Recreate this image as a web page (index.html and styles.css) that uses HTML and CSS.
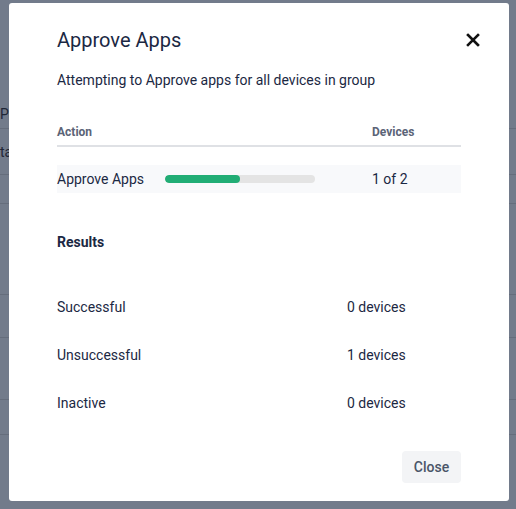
FILE: index.html
```html
<!DOCTYPE html>
<html>
<head>
<meta charset="utf-8">
<link rel="stylesheet" href="styles.css">
</head>
<body>
<div class="backdrop">
  <div class="bg-table">
    <div class="bg-row r1"><span class="bg-text">Po</span></div>
    <div class="bg-row r2"><span class="bg-text">ta</span></div>
    <div class="bg-row r3"></div>
    <div class="bg-row r4"></div>
    <div class="bg-row r5"></div>
    <div class="bg-row r6"></div>
    <div class="bg-row r7"></div>
  </div>
</div>
<div class="modal">
  <div class="modal-head">
    <h1 class="title">Approve Apps</h1>
    <button class="x-btn" aria-label="Close">
      <svg width="14" height="14" viewBox="0 0 14 14"><path d="M2 2L12 12M12 2L2 12" stroke="#111" stroke-width="2.6" stroke-linecap="square"/></svg>
    </button>
  </div>
  <p class="subtitle">Attempting to Approve apps for all devices in group</p>
  <div class="table">
    <div class="thead">
      <div class="c-action">Action</div>
      <div class="c-devices">Devices</div>
    </div>
    <div class="trow">
      <div class="c-action action-cell">
        <span class="action-name">Approve Apps</span>
        <div class="progress"><div class="progress-fill" style="width:50%"></div></div>
      </div>
      <div class="c-devices">1 of 2</div>
    </div>
  </div>
  <h2 class="results-title">Results</h2>
  <div class="results">
    <div class="res-row"><span class="res-label">Successful</span><span class="res-val">0 devices</span></div>
    <div class="res-row"><span class="res-label">Unsuccessful</span><span class="res-val">1 devices</span></div>
    <div class="res-row"><span class="res-label">Inactive</span><span class="res-val">0 devices</span></div>
  </div>
  <div class="footer">
    <button class="close-btn">Close</button>
  </div>
</div>
</body>
</html>
```
FILE: styles.css
```css
* { box-sizing: border-box; }
html, body { margin: 0; padding: 0; }
body {
  width: 516px;
  height: 509px;
  overflow: hidden;
  background: #727b8b;
  font-family: Roboto, "Noto Sans", sans-serif;
  color: #1b2843;
  position: relative;
}
.backdrop { width: 516px; height: 509px; }
.bg-table { display: flex; flex-direction: column; }
.bg-row { border-bottom: 1px solid #656d7c; display: flex; align-items: center; }
.r1 { height: 129px; align-items: flex-end; padding-bottom: 6px; }
.r2 { height: 46px; }
.r3 { height: 29px; }
.r4 { height: 91px; }
.r5 { height: 43px; }
.r6 { height: 62px; }
.r7 { height: 35px; }
.bg-text { font-size: 14px; color: #1f2636; }
.modal {
  position: absolute;
  left: 9px;
  top: 3px;
  width: 500px;
  height: 498px;
  background: #fff;
  border-radius: 3px;
  padding: 24px 48px 0 48px;
  display: flex;
  flex-direction: column;
}
.modal-head { display: flex; justify-content: space-between; align-items: center; height: 26px; }
.title { margin: 0; font-size: 20px; font-weight: 400; color: #1b2843; letter-spacing: 0; }
.x-btn { border: 0; background: none; padding: 0; margin-right: -19px; width: 14px; height: 14px; display: flex; }
.subtitle { margin: 17px 0 0 0; font-size: 14px; line-height: 20px; }
.table { margin-top: 35px; }
.thead {
  display: flex;
  font-size: 12px;
  font-weight: 700;
  color: #5b6477;
  height: 22px;
  border-bottom: 2px solid #dfe1e5;
  align-items: flex-start;
}
.c-action { width: 315px; }
.c-devices { flex: 1; }
.trow {
  margin-top: 18px;
  display: flex;
  align-items: center;
  height: 28px;
  background: #f8f9fb;
  font-size: 14px;
}
.action-cell { display: flex; align-items: center; }
.action-name { width: 108px; }
.progress { width: 150px; height: 8px; border-radius: 4px; background: #e4e4e4; overflow: hidden; }
.progress-fill { height: 100%; background: #21ad75; border-radius: 4px; }
.results-title { margin: 39px 0 0 0; font-size: 14px; font-weight: 700; line-height: 20px; }
.results { margin-top: 45px; display: flex; flex-direction: column; gap: 28px; }
.res-row { display: flex; font-size: 14px; line-height: 20px; }
.res-label { width: 290px; }
.footer { margin-top: 38px; display: flex; justify-content: flex-end; }
.close-btn {
  border: 0;
  background: #f3f4f6;
  border-radius: 4px;
  width: 59px;
  height: 32px;
  font-family: inherit;
  font-size: 14px;
  font-weight: 500;
  color: #4a5568;
}
```
